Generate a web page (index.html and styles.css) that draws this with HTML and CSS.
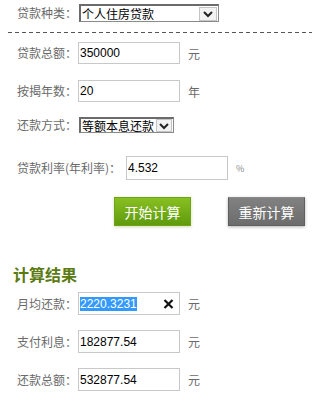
FILE: index.html
```html
<!DOCTYPE html>
<html lang="zh-CN">
<head>
<meta charset="utf-8">
<title>房贷计算器</title>
<link rel="stylesheet" href="styles.css">
</head>
<body>
<div class="calc">
  <div class="row r-type">
    <span class="lbl">贷款种类：</span>
    <div class="sel sel-type">
      <span class="sel-val">个人住房贷款</span>
      <span class="sel-arrow"><svg width="12" height="10" viewBox="0 0 12 10"><polyline points="2,3 6,7 10,3" fill="none" stroke="#222" stroke-width="2"/></svg></span>
    </div>
  </div>
  <div class="dash"></div>
  <div class="row r-amt">
    <span class="lbl">贷款总额：</span>
    <input class="fld" value="350000">
    <span class="unit">元</span>
  </div>
  <div class="row r-years">
    <span class="lbl">按揭年数：</span>
    <input class="fld" value="20">
    <span class="unit">年</span>
  </div>
  <div class="row r-method">
    <span class="lbl">还款方式：</span>
    <div class="sel sel-method">
      <span class="sel-val">等额本息还款</span>
      <span class="sel-arrow"><svg width="12" height="10" viewBox="0 0 12 10"><polyline points="2,3 6,7 10,3" fill="none" stroke="#222" stroke-width="2"/></svg></span>
    </div>
  </div>
  <div class="row r-rate">
    <span class="lbl lbl-rate">贷款利率(年利率)：</span>
    <input class="fld fld-rate" value="4.532">
    <span class="pct">%</span>
  </div>
  <div class="btns">
    <button class="btn btn-go">开始计算</button>
    <button class="btn btn-reset">重新计算</button>
  </div>
  <h2 class="res-title">计算结果</h2>
  <div class="row r-res1">
    <span class="lbl">月均还款：</span>
    <div class="fld fld-box"><span class="hl">2220.3231</span><span class="clr"><svg width="11" height="10" viewBox="0 0 11 10"><path d="M1.5 1 L9.5 9 M9.5 1 L1.5 9" stroke="#111" stroke-width="2.2" fill="none"/></svg></span></div>
    <span class="unit">元</span>
  </div>
  <div class="row r-res2">
    <span class="lbl">支付利息：</span>
    <input class="fld" value="182877.54">
    <span class="unit">元</span>
  </div>
  <div class="row r-res3">
    <span class="lbl">还款总额：</span>
    <input class="fld" value="532877.54">
    <span class="unit">元</span>
  </div>
</div>
</body>
</html>
```
FILE: styles.css
```css
html, body {
  margin: 0;
  padding: 0;
  background: #fff;
}
body {
  font-family: "Noto Sans CJK SC", "Liberation Sans", sans-serif;
  font-size: 12px;
  color: #666;
}
.calc {
  width: 312px;
  height: 393px;
  overflow: hidden;
}
.row {
  display: flex;
  align-items: center;
  padding-left: 17px;
}
.lbl {
  width: 61px;
  flex: none;
  font-size: 12px;
  line-height: 16px;
  color: #6a6a6a;
  white-space: nowrap;
}
.lbl-rate {
  width: 109px;
}
.r-type { margin-top: 4px; height: 18px; }
.r-amt { margin-top: 9px; height: 22px; }
.r-years { margin-top: 16px; height: 22px; }
.r-method { margin-top: 15px; height: 16px; }
.r-rate { margin-top: 23px; height: 24px; }
.r-res1 { margin-top: 7px; height: 23px; }
.r-res2 { margin-top: 15px; height: 23px; }
.r-res3 { margin-top: 15px; height: 23px; }

.dash {
  margin: 10px 0 0 8px;
  height: 1px;
  background: repeating-linear-gradient(to right, #555 0 4px, transparent 4px 7px);
}

.sel {
  box-sizing: border-box;
  display: flex;
  align-items: center;
  height: 100%;
  margin-left: 1px;
  background: #fff;
  border: 1px solid #8a8a8a;
  border-top: 2px solid #6b6b6b;
  border-left: 2px solid #6b6b6b;
}
.sel-type { width: 140px; }
.sel-method { width: 95px; }
.sel-val {
  flex: 1;
  font-size: 12px;
  color: #000;
  line-height: 14px;
  padding-left: 1px;
  white-space: nowrap;
}
.sel-arrow {
  box-sizing: border-box;
  display: flex;
  align-items: center;
  justify-content: center;
  width: 18px;
  height: 14px;
  margin-right: 1px;
  background: #f2f2f2;
  border: 1px solid #c4c4c4;
}
.sel-method .sel-arrow {
  width: 16px;
  height: 13px;
  margin-right: 1px;
}

.fld {
  box-sizing: border-box;
  width: 102px;
  height: 100%;
  margin: 0;
  padding: 0 0 0 1px;
  border: 1px solid #c8c8c8;
  font-family: "Liberation Sans", Arial, sans-serif;
  font-size: 12px;
  color: #000;
  background: #fff;
  outline: none;
}
.fld-rate {
  margin-left: 0;
}
.fld-box {
  display: flex;
  align-items: center;
}
.hl {
  background: #3399ff;
  color: #fff;
  line-height: 14px;
  padding: 0;
}
.clr {
  display: flex;
  margin-left: auto;
  margin-right: 5px;
}
.unit {
  margin-left: 8px;
  font-size: 12px;
  color: #6a6a6a;
}
.pct {
  margin-left: 8px;
  font-size: 9px;
  color: #888;
}

.btns {
  display: flex;
  margin-top: 17px;
  padding-left: 114px;
  gap: 37px;
}
.btn {
  box-sizing: border-box;
  width: 77px;
  height: 29px;
  padding: 0;
  font-family: "Noto Sans CJK SC", sans-serif;
  font-size: 14px;
  color: #fff;
  border: none;
  cursor: pointer;
}
.btn-go {
  background: linear-gradient(#88c022, #5f9a0d);
  border: 1px solid #6da515;
  box-shadow: 0 1px 3px rgba(120, 150, 40, 0.35);
}
.btn-reset {
  background: linear-gradient(#818181, #6c6c6c);
  border: 1px solid #5f5f5f;
  border-top-color: #8a8a8a;
  box-shadow: 0 1px 3px rgba(0, 0, 0, 0.3);
}

.res-title {
  margin: 37px 0 0 13px;
  height: 22px;
  font-size: 16px;
  line-height: 22px;
  font-weight: bold;
  color: #5c7a12;
}
```
